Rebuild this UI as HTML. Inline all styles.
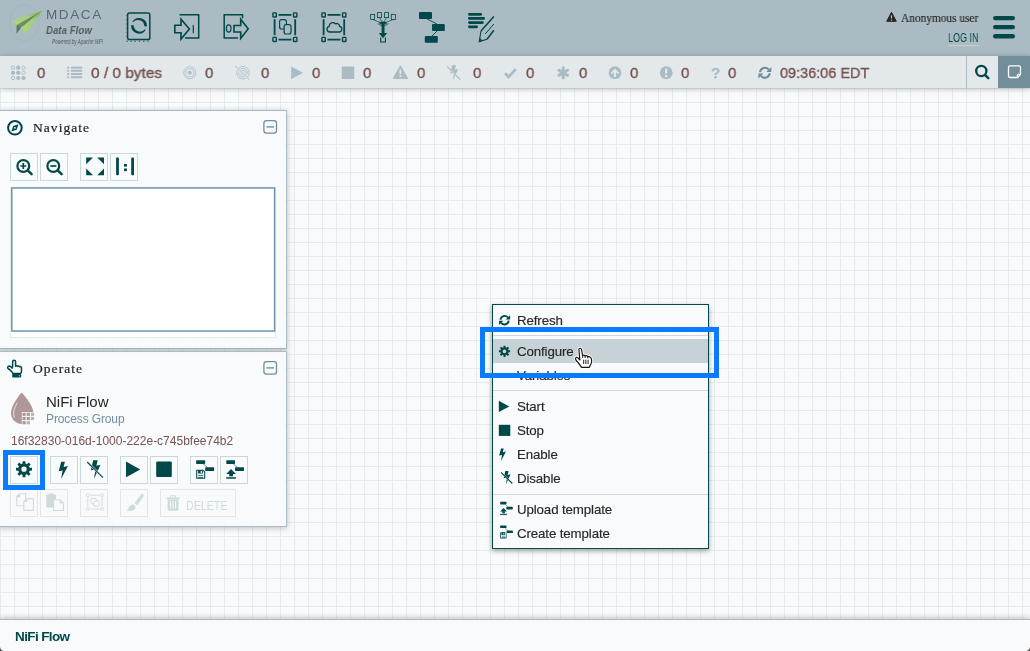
<!DOCTYPE html>
<html lang="en">
<head>
<meta charset="utf-8">
<title>NiFi Flow</title>
<style>
*{box-sizing:border-box;margin:0;padding:0}
html,body{width:1030px;height:651px;overflow:hidden}
body{position:relative;background:#f9fafb;font-family:"Liberation Sans",sans-serif;color:#262626;font-size:13px}
.abs{position:absolute}
.t{position:absolute;white-space:nowrap;line-height:1;transform-origin:0 0;will-change:transform}
svg{position:absolute;overflow:visible;display:block}
/* canvas grid */
#canvas{position:absolute;left:0;top:88px;width:1030px;height:563px;background-color:#f9fafb;
 background-image:linear-gradient(#e6eced 1px,transparent 1px),linear-gradient(90deg,#e6eced 1px,transparent 1px);
 background-size:14px 14px;background-position:0 0}
/* header */
#header{position:absolute;left:0;top:0;width:1030px;height:56px;background:#aabbc3}
#status{position:absolute;left:0;top:56px;width:1030px;height:32px;background:#e3e8eb;box-shadow:0 1px 6px rgba(0,0,0,.25)}
.sv{color:#775351;font-size:15.5px;top:9px;transform:scaleX(.965);-webkit-text-stroke:.4px #775351}
/* panels */
.panel{position:absolute;left:-1px;width:288px;background:rgba(249,250,251,.92);border:1px solid #aabbc3;box-shadow:0 1px 6px rgba(0,0,0,.25)}
.btn{position:absolute;width:28px;height:28px;border:1px solid #cbd8d9;background:rgba(249,250,251,1)}
.btn.dis{border-color:#dfe7e8}
.ptitle{font-family:"Liberation Serif",serif;font-size:13.5px;letter-spacing:1.05px;color:#262626;-webkit-text-stroke:.22px #262626}
/* context menu */
#menu{position:absolute;left:492px;top:304px;width:217px;height:245px;background:rgba(249,250,251,.92);border:1px solid #004849;box-shadow:0 2px 5px rgba(0,0,0,.35)}
.mi{position:absolute;left:0;width:215px;height:24px}
.mi .t{left:24px;top:5.8px;font-size:13.3px;letter-spacing:-.12px;color:#262626;-webkit-text-stroke:.15px #262626}
.sep{position:absolute;left:0;width:215px;height:1px;background:#cfd9dd}
.hl{position:absolute;border:5px solid #0a7cfb}
/* footer */
#crumbs{position:absolute;left:0;top:619px;width:1030px;height:32px;background:rgba(249,250,251,.92);border-top:1px solid #aabbc3;box-shadow:0 -1px 6px rgba(0,0,0,.25)}
</style>
</head>
<body>
<div id="canvas"></div>

<!-- ===== HEADER ===== -->
<div id="header">
  <span class="t" id="mdaca" style="left:46px;top:7.6px;font-size:13.5px;letter-spacing:1.6px;color:#5c6770">MDACA</span>
  <span class="t" id="dflow" style="left:46px;top:24.5px;font-size:11px;font-weight:bold;font-style:italic;color:#555b5e;transform:scaleX(.88)">Data Flow</span>
  <span class="t" id="powered" style="left:52px;top:39px;font-size:6.3px;font-style:italic;color:#555b5e;transform:scaleX(.74)">Powered by Apache NiFi</span>
  <span class="t" id="anon" style="left:901px;top:12px;font-family:'Liberation Serif',serif;font-size:12px;color:#262626;transform:scaleX(.945);-webkit-text-stroke:.15px #262626">Anonymous user</span>
  <span class="t" id="login" style="left:948px;top:32px;font-size:12px;color:#004849;border-bottom:1px solid #c3d0d6;padding-bottom:1px;transform:scaleX(.75)">LOG IN</span>
</div>

<!-- ===== STATUS BAR ===== -->
<div id="status">
  <span class="t sv" style="left:37.4px">0</span>
  <span class="t sv" id="bytes" style="left:90.5px;transform:scaleX(.993)">0 / 0 bytes</span>
  <span class="t sv" style="left:205.2px">0</span>
  <span class="t sv" style="left:261.4px">0</span>
  <span class="t sv" style="left:311.7px">0</span>
  <span class="t sv" style="left:363.2px">0</span>
  <span class="t sv" style="left:416.6px">0</span>
  <span class="t sv" style="left:473.2px">0</span>
  <span class="t sv" style="left:526.4px">0</span>
  <span class="t sv" style="left:578.9px">0</span>
  <span class="t sv" style="left:630.2px">0</span>
  <span class="t sv" style="left:681.4px">0</span>
  <span class="t" id="qm" style="left:711.3px;top:9.2px;font-size:15.5px;font-weight:bold;color:#aabbc3;-webkit-text-stroke:.3px #aabbc3">?</span>
  <span class="t sv" style="left:728.4px">0</span>
  <span class="t sv" id="clock" style="left:779.8px;transform:scaleX(.933)">09:36:06 EDT</span>
  <div class="abs" style="left:966px;top:0;width:1px;height:32px;background:#aabbc3"></div>
  <div class="abs" id="bull" style="left:998px;top:0;width:32px;height:32px;background:#728e9b"></div>
</div>

<!-- ===== NAVIGATE PANEL ===== -->
<div class="panel" id="nav" style="top:110px;height:239px">
  <span class="t ptitle" id="navt" style="left:32.6px;top:10px">Navigate</span>
  <div class="btn" style="left:10px;top:42px"></div>
  <div class="btn" style="left:40px;top:42px"></div>
  <div class="btn" style="left:80px;top:42px"></div>
  <div class="btn" style="left:110px;top:42px"></div>
  <div class="abs" id="birdseye" style="left:10px;top:76px;width:266px;height:151px;background:#fff;border:1px solid #e6ecee"></div>
  
</div>

<!-- ===== OPERATE PANEL ===== -->
<div class="panel" id="op" style="top:351px;height:176px">
  <span class="t ptitle" id="opt" style="left:32.6px;top:10px">Operate</span>
  <span class="t" id="nf" style="left:46.2px;top:42px;font-size:15px;color:#262626">NiFi Flow</span>
  <span class="t" id="pg" style="left:46.2px;top:61px;font-size:12px;color:#728e9b;letter-spacing:-.12px">Process Group</span>
  <span class="t" id="uuid" style="left:11px;top:83px;font-size:12px;color:#775351">16f32830-016d-1000-222e-c745bfee74b2</span>
  <div class="btn" style="left:10px;top:104px"></div>
  <div class="btn" style="left:50px;top:104px"></div>
  <div class="btn" style="left:80px;top:104px"></div>
  <div class="btn" style="left:120px;top:104px"></div>
  <div class="btn" style="left:150px;top:104px"></div>
  <div class="btn" style="left:190px;top:104px"></div>
  <div class="btn" style="left:220px;top:104px"></div>
  <div class="btn dis" style="left:10px;top:137px"></div>
  <div class="btn dis" style="left:40px;top:137px"></div>
  <div class="btn dis" style="left:80px;top:137px"></div>
  <div class="btn dis" style="left:120px;top:137px"></div>
  <div class="btn dis" style="left:160px;top:137px;width:76px">
    <span class="t" id="del" style="left:25px;top:9.5px;font-size:12px;color:#cfdadc;transform:scaleX(.89)">DELETE</span>
  </div>
</div>
<div class="hl" style="left:3px;top:450px;width:42px;height:40px"></div>

<!-- ===== CONTEXT MENU ===== -->
<div id="menu">
  <div class="mi" style="top:3px"><span class="t">Refresh</span></div>
  <div class="sep" style="top:30px"></div>
  <div class="mi" style="top:34px;background:#c7d2d7"><span class="t">Configure</span></div>
  <div class="mi" style="top:58px"><span class="t">Variables</span></div>
  <div class="sep" style="top:85px"></div>
  <div class="mi" style="top:89px"><span class="t">Start</span></div>
  <div class="mi" style="top:113px"><span class="t">Stop</span></div>
  <div class="mi" style="top:137px"><span class="t">Enable</span></div>
  <div class="mi" style="top:161px"><span class="t">Disable</span></div>
  <div class="sep" style="top:189px"></div>
  <div class="mi" style="top:192px"><span class="t">Upload template</span></div>
  <div class="mi" style="top:216px"><span class="t">Create template</span></div>
</div>
<!-- ICONS-START -->
<svg id="ico" width="1030" height="651" viewBox="0 0 1030 651" style="left:0;top:0;pointer-events:none">
<defs>
  <linearGradient id="lg1" x1="1" y1="0" x2="0" y2="1"><stop offset="0" stop-color="#6fb53c"/><stop offset=".45" stop-color="#a3d177"/><stop offset="1" stop-color="#a9d680"/></linearGradient>
  <symbol id="gear" viewBox="-1 -1 2 2" overflow="visible"><path fill-rule="evenodd" d="M-0.185 -0.696 L-0.168 -0.986 L0.168 -0.986 L0.185 -0.696 L0.362 -0.623 L0.578 -0.816 L0.816 -0.578 L0.623 -0.362 L0.696 -0.185 L0.986 -0.168 L0.986 0.168 L0.696 0.185 L0.623 0.362 L0.816 0.578 L0.578 0.816 L0.362 0.623 L0.185 0.696 L0.168 0.986 L-0.168 0.986 L-0.185 0.696 L-0.362 0.623 L-0.578 0.816 L-0.816 0.578 L-0.623 0.362 L-0.696 0.185 L-0.986 0.168 L-0.986 -0.168 L-0.696 -0.185 L-0.623 -0.362 L-0.816 -0.578 L-0.578 -0.816 L-0.362 -0.623Z M0.330 0 A0.330 0.330 0 1 0 -0.330 0 A0.330 0.330 0 1 0 0.330 0Z"/></symbol>
  <g id="bolt"><polygon points="2.5,0 6.2,0 4.9,5.2 9.2,4.2 2.8,16.5 2.5,16.4 3.9,8.8 0,9.5"/></g>
  <g id="bolts"><polygon points="6,0 10.5,0 9.2,5.5 13.3,4.6 7.2,17.7 6.9,17.6 8.4,9.2 3.7,10.1"/><path d="M0 1.8 L15.8 17.4" stroke-width="2.1" class="halo"/><path d="M0 1.8 L15.8 17.4" stroke="currentColor" stroke-width="1.15" vector-effect="non-scaling-stroke"/></g>
  <g id="rf" fill="currentColor" stroke="currentColor"><path d="M2.1 6 A5 5 0 0 1 11 3.3" stroke-width="2.2" fill="none"/><polygon stroke="none" points="13.6,0.6 13.6,5.8 8.4,5.8"/><path d="M11.9 7 A5 5 0 0 1 3 9.7" stroke-width="2.2" fill="none"/><polygon stroke="none" points="0.4,12.4 0.4,7.2 5.6,7.2"/></g>
  <g id="tplsave"><rect x="0.1" y="-.2" width="9.1" height="3.6" rx=".7"/><rect x="9.2" y="6.8" width="9" height="3.7" rx=".7"/><path d="M7 3.2 L11.5 7" stroke="currentColor" stroke-width=".7" opacity=".8"/><path d="M.7 9.8 H7.3 L8.7 11.2 V17.7 H.7Z" fill="none" stroke="currentColor" stroke-width="1.05" stroke-linejoin="round"/><path fill-rule="evenodd" d="M2.1 9.8 H6.9 V13.1 H2.1Z M4.7 10.3 V12.4 H5.9 V10.3Z"/><path d="M2.2 14.9 H7.2 M2.2 16.9 H7.2" stroke="currentColor" stroke-width=".8" fill="none"/></g>
  <g id="tplup"><rect x="0.25" y="-.2" width="8.8" height="3.6" rx=".7"/><rect x="9" y="6.8" width="9" height="3.7" rx=".7"/><path d="M7 3.2 L11.5 7" stroke="currentColor" stroke-width=".7" opacity=".8"/><polygon points="0.2,13.4 5.05,8.4 9.9,13.4"/><rect x="3.2" y="13" width="3.8" height="2.8"/><rect x="0.2" y="16.7" width="9.7" height="1.5"/></g>
  <g id="pgframe" fill="none" stroke="currentColor"><rect x=".7" y=".7" width="3.4" height="4.1" rx=".6" stroke-width="1.4"/><rect x="21.3" y=".7" width="3.4" height="4.1" rx=".6" stroke-width="1.4"/><rect x=".7" y="25.2" width="3.4" height="4.1" rx=".6" stroke-width="1.4"/><rect x="21.3" y="25.2" width="3.4" height="4.1" rx=".6" stroke-width="1.4"/><path d="M6.3 2.6 H19.2 M6.3 27.4 H19.2 M2.4 7 V23 M23 7 V23" stroke-width="1.8"/></g>
</defs>
<style>.halo{stroke:var(--halo,#f9fafb)}</style>

<!-- logo -->
<ellipse cx="24.3" cy="22.8" rx="14.6" ry="18" fill="none" stroke="#a1b3bb" stroke-width=".7"/>
<polygon points="42.4,10.5 11.7,20.7 16.8,25" fill="url(#lg1)"/>
<polygon points="42.4,10.5 16.8,25 16.6,33.5 20.6,28.2" fill="#6e8c68"/>
<polygon points="16.8,25 16.6,33.5 20.6,28.2" fill="#5e7a5c"/>
<polygon points="42.4,10.5 20.4,28.2 26.4,33.2" fill="url(#lg1)"/>

<!-- header component icons -->
<g fill="none" stroke="#004849" color="#004849">
  <!-- processor -->
  <rect x="127.6" y="12.9" width="22.2" height="26.6" rx="1.8" stroke-width="1.5"/>
  <path d="M126.5 41.2h1.3m2.6 0h1.3m2.8 0h1.3m3 0h1.3m3 0h1.3m3 0h1.3" stroke-width="1"/>
  <path d="M126.3 15v1.2m0 3v1.2m0 3v1.2m0 3v1.2m0 3v1.2m0 3v1.2" stroke-width=".7" opacity=".7"/>
  <path d="M132.25 21.90 A7.8 7.8 0 0 1 146.77 26.48 L144.36 26.27 A6.4 6.4 0 0 0 133.01 22.34Z M145.75 29.70 A7.8 7.8 0 0 1 131.23 25.12 L133.64 25.33 A6.4 6.4 0 0 0 144.99 29.26Z" fill="#004849" stroke="none"/>
  <!-- input port -->
  <path d="M179.5 14.8 H198.7 V37.9 H185" stroke-width="1.5"/>
  <path d="M174.8 25.3 H181 V19.2 L189.4 29 L181 39 V32.7 H174.8 Z" fill="#aabbc3" stroke-width="1.6"/>
  <path d="M193.3 25 V33.2" stroke-width="1.2"/>
  <!-- output port -->
  <path d="M242.5 18.2 V14.8 H224.2 V37.9 H238" stroke-width="1.5"/>
  <ellipse cx="228.7" cy="28.5" rx="2.3" ry="3.6" stroke-width="1.2"/>
  <path d="M234 25.5 H240.7 V19.4 L248.2 28.8 L240.7 38.4 V32 H234 Z" fill="#aabbc3" stroke-width="1.6"/>
  <!-- process group -->
  <use href="#pgframe" x="272.2" y="12.2"/>
  <rect x="279.6" y="19.6" width="6.8" height="9.4" rx="2" stroke-width="1.2"/>
  <rect x="284.1" y="24.6" width="6.9" height="9.4" rx="2" stroke-width="1.2" fill="#aabbc3"/>
  <!-- remote process group -->
  <use href="#pgframe" x="321.2" y="12.2"/>
  <path d="M329.7 32 a2.9 2.9 0 0 1 -.5 -5.7 a3.6 3.6 0 0 1 6.2 -2.5 a3 3 0 0 1 4.3 2.6 a2.85 2.85 0 0 1 -.6 5.6 Z" stroke-width="1.3"/>
  <!-- funnel -->
  <g stroke-width=".8"><rect x="370.6" y="14.4" width="4" height="5"/><rect x="377.4" y="12.6" width="4" height="5"/><rect x="384.6" y="12.6" width="4" height="5"/><rect x="391.3" y="14.4" width="4.1" height="5"/>
  <path d="M372.6 19.4 L380.5 22.6 M379.4 17.6 L382 22 M386.6 17.6 L384 22 M393.3 19.4 L385.5 22.6 M377.8 23.6 Q383 28.2 388.4 23.6" stroke-width=".7"/></g>
  <ellipse cx="383" cy="23" rx="3.7" ry="1.5" fill="#004849" stroke="none"/>
  <rect x="381.6" y="24" width="2.9" height="9.5" fill="#004849" stroke="none"/>
  <polygon points="378.8,33 387.2,33 383,38.2" fill="#004849" stroke="none"/>
  <path d="M380.7 37.6 V42 H385.4 V37.6" stroke-width="1.1"/>
  <!-- template -->
  <g fill="#004849" stroke="none"><rect x="419" y="12" width="13" height="7" rx="1"/><rect x="432" y="24" width="12.8" height="7" rx="1"/><rect x="424.8" y="36" width="13" height="6.8" rx="1"/></g>
  <path d="M427 19 L437 24 M437 31 L432 36" stroke-width=".9"/>
  <!-- label -->
  <path d="M469.4 14.3 H480.8 M469.4 18.4 H483.6 M469.4 22.6 H482.4 M469.4 26.8 H476.6" stroke-width="2.8" stroke-linecap="round"/>
  <path d="M481 31 L493.9 16.4 M487 39.2 L493.9 30.2" stroke-width="1.5"/>
  <path d="M485.2 34 L493.9 24" stroke-width="1"/>
  <path d="M481 31 L479.2 41.6 L487 39.2" stroke-width="1.1"/>
  <polygon points="479,41.9 479.9,38 482.8,40.8" fill="#004849" stroke="none"/>
</g>
<!-- user warning + hamburger -->
<path d="M891.5 12.3 L896.3 21.3 H886.7 Z" fill="#262626" stroke="#262626" stroke-width="1" stroke-linejoin="round"/>
<path d="M891.5 15.2 V18.6 M891.5 19.6 V20.8" stroke="#aabbc3" stroke-width="1.2"/>
<path d="M995.2 18.1 H1012.8 M995.2 27.1 H1012.8 M995.2 36.2 H1012.8" stroke="#004849" stroke-width="4.4" stroke-linecap="round"/>

<!-- status bar icons -->
<g class="st" fill="#aabbc3" stroke="none" color="#aabbc3" style="--halo:#e3e8eb">
  <g><circle cx="18.2" cy="67.7" r="2.1"/><circle cx="13" cy="72.8" r="2.1"/><circle cx="18.2" cy="72.8" r="2.1"/><circle cx="18.2" cy="78" r="2.1"/><circle cx="23.5" cy="78" r="2.1"/>
  <g fill="none" stroke="#aabbc3" stroke-width=".9"><circle cx="13" cy="67.7" r="1.65"/><circle cx="23.5" cy="67.7" r="1.65"/><circle cx="23.5" cy="72.8" r="1.65"/><circle cx="13" cy="78" r="1.65"/></g></g>
  <g><rect x="67.2" y="66.6" width="1.9" height="2"/><rect x="71" y="66.6" width="11.2" height="2"/><rect x="67.2" y="69.8" width="1.9" height="2"/><rect x="71" y="69.8" width="11.2" height="2"/><rect x="67.2" y="73" width="1.9" height="2"/><rect x="71" y="73" width="11.2" height="2"/><rect x="67.2" y="76.2" width="1.9" height="2"/><rect x="71" y="76.2" width="11.2" height="2"/></g>
  <g fill="none" stroke="#aabbc3" stroke-width=".8"><circle cx="189.8" cy="72.7" r="6.1"/><circle cx="189.8" cy="72.7" r="4.1"/><circle cx="189.8" cy="72.7" r="1.6" fill="#aabbc3"/>
  <circle cx="243" cy="72.7" r="6.3"/><circle cx="243" cy="72.7" r="4.3"/><circle cx="243" cy="72.7" r="2.3"/><path d="M235.2 65.8 L249.2 79.5" stroke="#e3e8eb" stroke-width="2.4"/><path d="M235.2 65.8 L249.2 79.5" stroke-width="1"/></g>
  <polygon points="291.2,66.5 303,72.8 291.2,79.2"/>
  <rect x="341.8" y="66.5" width="12.4" height="12.5"/>
  <path d="M400.4 66 L407.4 78.4 H393.4 Z" stroke="#aabbc3" stroke-width="1.2" stroke-linejoin="round"/>
  <rect x="399.5" y="69.6" width="1.8" height="4.4" fill="#e3e8eb"/><rect x="399.5" y="75.2" width="1.8" height="1.8" fill="#e3e8eb"/>
  <use href="#bolts" transform="translate(447.2 65.2) scale(.83)" style="--halo:#e3e8eb"/>
  <path d="M505 73.3 L508.6 76.9 L515.7 69.1" fill="none" stroke="#aabbc3" stroke-width="2.8"/>
  <path d="M563.2 67.8 V77.8 M558.9 70.3 L567.5 75.3 M558.9 75.3 L567.5 70.3" fill="none" stroke="#aabbc3" stroke-width="3" stroke-linecap="round"/>
  <circle cx="615" cy="72.7" r="6.4"/><path d="M615 68.5 L619.4 72.9 L618.1 74.2 L616.1 72.2 V77 H613.9 V72.2 L611.9 74.2 L610.6 72.9Z" fill="#e3e8eb"/>
  <circle cx="666.2" cy="72.7" r="6.4"/><rect x="665.1" y="68.4" width="2.2" height="5.2" rx=".5" fill="#e3e8eb"/><rect x="665.1" y="75" width="2.2" height="2.1" fill="#e3e8eb"/>
  <use href="#rf" transform="translate(758 66.4) scale(.98)" color="#728e9b"/>
</g>
<!-- search + bulletin -->
<circle cx="981.3" cy="71" r="5.1" fill="none" stroke="#004849" stroke-width="2.3"/>
<path d="M985 74.8 L988.3 78.2" stroke="#004849" stroke-width="2.4" stroke-linecap="round"/>
<path d="M1010 65.9 H1019 a1.5 1.5 0 0 1 1.5 1.5 V74.6 L1017.6 77.5 H1010 a1.5 1.5 0 0 1 -1.5 -1.5 V67.4 a1.5 1.5 0 0 1 1.5 -1.5Z M1020.3 74.4 H1018.4 a1 1 0 0 0 -1 1 V77.3" fill="none" stroke="#fff" stroke-width="1.3"/>
<!-- navigate panel icons -->
<rect x="11.8" y="187.95" width="262.8" height="143.1" fill="none" stroke="#6d95ab" stroke-width="1.5"/>
<g fill="#004849" stroke="none" color="#004849">
  <circle cx="14.9" cy="127.8" r="6.8" fill="none" stroke="#004849" stroke-width="2"/>
  <polygon points="18.4,124.2 16.7,129.7 11.4,131.4 13.1,125.9"/><circle cx="14.9" cy="127.8" r=".9" fill="#f9fafb"/>
  <rect x="263.9" y="120.6" width="12.6" height="12.6" rx="2.6" fill="none" stroke="#728e9b" stroke-width="1.3"/><path d="M266.5 126.9 H274" stroke="#728e9b" stroke-width="1.4"/>
  <rect x="263.9" y="361.6" width="12.6" height="12.6" rx="2.6" fill="none" stroke="#728e9b" stroke-width="1.3"/><path d="M266.5 367.9 H274" stroke="#728e9b" stroke-width="1.4"/>
  <!-- zoom in / out -->
  <g fill="none" stroke="#004849"><circle cx="23.3" cy="166" r="5.9" stroke-width="2.2"/><path d="M27.9 170.6 L31.6 174.1" stroke-width="2.5" stroke-linecap="round"/><path d="M20.3 166 H26.3 M23.3 163 V169" stroke-width="1.7"/>
  <circle cx="53.3" cy="166" r="5.9" stroke-width="2.2"/><path d="M57.9 170.6 L61.6 174.1" stroke-width="2.5" stroke-linecap="round"/><path d="M50.3 166 H56.3" stroke-width="1.7"/></g>
  <!-- fit -->
  <polygon points="86.2,157.5 93,157.5 86.2,164.3"/><polygon points="104,157.5 97.2,157.5 104,164.3"/><polygon points="86.2,175.2 93,175.2 86.2,168.4"/><polygon points="104,175.2 97.2,175.2 104,168.4"/>
  <!-- 1:1 -->
  <rect x="116.1" y="157.5" width="2.8" height="17.7" rx=".9"/><rect x="131.2" y="157.5" width="2.8" height="17.7" rx=".9"/><rect x="124" y="164" width="2.9" height="2.6"/><rect x="124" y="168.5" width="2.9" height="2.6"/>

  <!-- operate: hand -->
  <path d="M12.6 367.6 V361.7 a1.5 1.5 0 0 1 3 0 V366.2 q1 -.9 2 .1 q1.1 -.7 2 .4 q1.5 -.4 1.9 1.2 V371 q0 1.6 -1 2.6 H12.9 q-.4 -1.6 -2.2 -3 L8.3 368.7 q-1.3 -1.3 .1 -2.3 q1.2 -.7 2.4 .3 L12.6 368.6" fill="none" stroke="#004849" stroke-width="1.5" stroke-linejoin="round"/>
  <rect x="12.2" y="374" width="9" height="3.5" rx=".8"/><circle cx="19.3" cy="375.8" r=".6" fill="#f9fafb"/>
  <!-- droplet -->
  <path d="M21.6 392.4 C21.6 392.4 11 404.5 11 412.9 a11.15 11.15 0 0 0 22.3 0 C33.3 404.5 21.6 392.4 21.6 392.4Z" fill="#ad9897"/>
  <path d="M14.3 417.5 q-2.3 -6.5 3.2 -15" fill="none" stroke="#fff" stroke-width=".8" opacity=".85"/>
  <rect x="21.8" y="412" width="12.8" height="12.8" fill="#f9fafb"/>
  <g fill="#ad9897"><rect x="26.7" y="408.6" width="3.2" height="3.2" opacity=".0"/><rect x="22.5" y="412.7" width="3.2" height="3.2"/><rect x="26.7" y="412.7" width="3.2" height="3.2"/><rect x="30.9" y="412.7" width="3.2" height="3.2" opacity=".75"/><rect x="22.5" y="416.9" width="3.2" height="3.2"/><rect x="26.7" y="416.9" width="3.2" height="3.2"/><rect x="30.9" y="416.9" width="3.2" height="3.2" opacity=".75"/><rect x="22.5" y="421.1" width="3.2" height="3.2"/><rect x="26.7" y="421.1" width="3.2" height="3.2" opacity=".75"/></g>
  <!-- operate row 1 -->
  <use href="#gear" x="15.9" y="461.1" width="16.2" height="16.2"/>
  <use href="#bolt" transform="translate(58.7 461.8)"/>
  <use href="#bolts" transform="translate(87.2 460.2)"/>
  <polygon points="126,461.6 140.3,469.4 126,477.2"/>
  <rect x="156.2" y="461.6" width="15.6" height="15.4" rx="1"/>
  <use href="#tplsave" transform="translate(196 460.5)"/>
  <use href="#tplup" transform="translate(226 460.5)"/>
</g>
<!-- operate row 2 (disabled) -->
<g fill="none" stroke="#cfdadc" stroke-width="1.1" color="#cfdadc" stroke-linejoin="round">
  <path d="M19.6 493.8 H25.6 V498 M16.8 496.6 V505.8 H23.4 M19.6 493.8 L16.8 496.6 H19.6 Z"/>
  <path d="M26.6 498.6 H33.4 V510.4 H23.8 V501.4 Z M26.6 498.6 V501.4 H23.8"/>
  <rect x="46.3" y="494.4" width="9.6" height="13.2" rx=".8" fill="#cfdadc" stroke="none"/><rect x="48.6" y="493.4" width="5" height="2" rx=".6" fill="#cfdadc" stroke="none"/>
  <path d="M53.6 499.8 H60.2 L63.4 503 V510.5 H53.6 Z" fill="#f9fafb"/><path d="M60.2 499.8 V503 H63.4"/>
  <g stroke-width=".9"><rect x="86.5" y="493.9" width="2.6" height="2.6" rx=".6"/><rect x="100.7" y="493.9" width="2.6" height="2.6" rx=".6"/><rect x="86.5" y="507.7" width="2.6" height="2.6" rx=".6"/><rect x="100.7" y="507.7" width="2.6" height="2.6" rx=".6"/>
  <path d="M90.2 495.2 H99.6 M90.2 509 H99.6 M87.8 497.6 V506.6 M102 497.6 V506.6"/>
  <rect x="91" y="498.4" width="5.4" height="5.4" rx="1.3"/><rect x="93.8" y="501" width="5.4" height="5.4" rx="1.3" fill="#f9fafb"/></g>
  <path d="M142.6 494 q1.8 .5 .8 2.6 l-6 8.6 l-2.8 -2.1 l6.4 -8.5 q.8 -.9 1.6 -.6z" fill="#cfdadc" stroke="none"/>
  <path d="M133.8 504.6 q2.8 1.8 1.2 4.4 q-2.8 3 -8.6 1.4 q2.4 -1 2.8 -3.2 q.8 -3.2 4.6 -2.6z" fill="#cfdadc" stroke="none"/>
  <g fill="#cfdadc" stroke="none"><rect x="166.4" y="497.6" width="13.3" height="1.6" rx=".4"/><path fill-rule="evenodd" d="M167.6 499.6 H178.5 V509.3 a1.5 1.5 0 0 1 -1.5 1.5 H169.1 a1.5 1.5 0 0 1 -1.5 -1.5 Z M170 501.2 V508.6 H171.1 V501.2Z M172.5 501.2 V508.6 H173.6 V501.2Z M175 501.2 V508.6 H176.1 V501.2Z"/></g>
  <path d="M170.6 497.6 v-1.1 a.8 .8 0 0 1 .8 -.8 h3.3 a.8 .8 0 0 1 .8 .8 v1.1" stroke-width="1.1"/>
</g>
<!-- context menu icons -->
<g fill="#004849" stroke="none" color="#004849">
  <use href="#rf" transform="translate(498.7 314.7) scale(.84)"/>
  <use href="#gear" x="498.8" y="345.6" width="11.4" height="11.4"/>
  <polygon points="498.8,400.8 509.3,406.4 498.8,411.9"/>
  <rect x="498.8" y="424.8" width="11.5" height="11.1"/>
  <use href="#bolt" transform="translate(499.2 448.5) scale(.73)"/>
  <use href="#bolts" transform="translate(501 471) scale(.72)"/>
  <use href="#tplup" transform="translate(500 502) scale(.71)"/>
  <use href="#tplsave" transform="translate(500 525.6) scale(.71)"/>
</g>
</svg>
<!-- ICONS-END -->
<div class="hl" style="left:480px;top:327px;width:239px;height:51px"></div>

<svg width="1030" height="651" viewBox="0 0 1030 651" style="left:0;top:0;pointer-events:none;z-index:50"><path d="M0 646.5 V651 H4.5 A4.5 4.5 0 0 1 0 646.5Z M1030 646.5 V651 H1025.5 A4.5 4.5 0 0 0 1030 646.5Z" fill="#5a5a5a"/></svg>
<!-- CUR-START -->
<svg id="cur" width="20" height="22" viewBox="0 0 20 22" style="left:574px;top:347px;pointer-events:none">
<path d="M4.9 2.4 Q5 1.2 6.1 1.2 Q7.3 1.2 7.5 2.4 L8.6 8.6 Q9.8 7.6 10.9 8.6 L11.2 9 Q12.6 8.2 13.6 9.4 L13.9 9.8 Q15.4 9.2 16.4 10.4 Q17.6 11.4 17.6 13 V15 Q17.4 16.5 15.2 20.4 H7.6 Q5.5 17 1.9 13 Q.9 11.6 1.9 10.6 Q3 9.8 4.2 11.2 L5.9 13 Z" fill="#fff" stroke="#fff" stroke-opacity=".85" stroke-width="3" stroke-linejoin="round"/>
<path d="M4.9 2.4 Q5 1.2 6.1 1.2 Q7.3 1.2 7.5 2.4 L8.6 8.6 Q9.8 7.6 10.9 8.6 L11.2 9 Q12.6 8.2 13.6 9.4 L13.9 9.8 Q15.4 9.2 16.4 10.4 Q17.6 11.4 17.6 13 V15 Q17.4 16.5 15.2 20.4 H7.6 Q5.5 17 1.9 13 Q.9 11.6 1.9 10.6 Q3 9.8 4.2 11.2 L5.9 13 Z" fill="#fff" stroke="#141414" stroke-width="1.15" stroke-linejoin="round"/>
<path d="M9.7 12.7 V17 M11.9 12.7 V17 M14.1 12.7 V17" stroke="#141414" stroke-width=".95"/>
<path d="M8.7 8.4 V10.9 M11.1 8.9 V11 M13.8 9.7 V11.4" stroke="#141414" stroke-width=".9"/>
</svg>
<!-- CUR-END -->
<!-- ===== BREADCRUMBS ===== -->
<div id="crumbs">
  <span class="t" id="bc" style="left:14.6px;top:10.4px;font-size:13.5px;font-weight:bold;color:#004849;letter-spacing:-.62px">NiFi Flow</span>
</div>
</body>
</html>
